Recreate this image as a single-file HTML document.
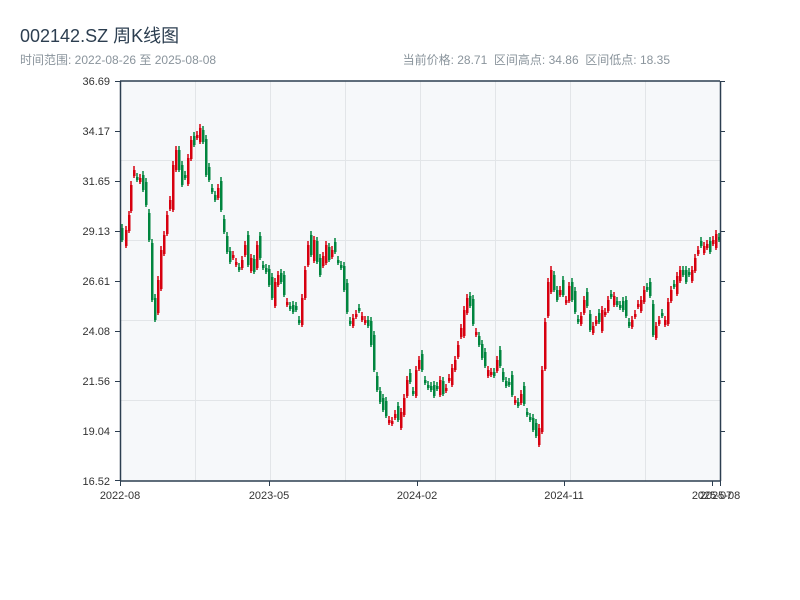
<!DOCTYPE html>
<html><head><meta charset="utf-8"><style>
body{margin:0;background:#fff;width:800px;height:600px;overflow:hidden;font-family:"Liberation Sans","Noto Sans CJK SC",sans-serif}
.t{position:absolute;left:20px;top:22px;font-size:18px;color:#2c3e50}
.s{position:absolute;left:20px;top:51px;font-size:12px;color:#8a949c}
.r{position:absolute;right:130px;top:51px;font-size:12px;color:#8a949c;white-space:pre}
svg{position:absolute;left:0;top:0}
</style></head><body>
<div class="t">002142.SZ 周K线图</div>
<div class="s">时间范围: 2022-08-26 至 2025-08-08</div>
<div class="r">当前价格: 28.71  区间高点: 34.86  区间低点: 18.35</div>
<svg id="c" width="800" height="600" xmlns="http://www.w3.org/2000/svg" font-family="Liberation Sans, sans-serif" font-size="11" fill="#333">
<rect x="120" y="81" width="600" height="400" fill="#f6f8fa"/>
<g stroke="#e2e5e8" stroke-width="1">
<line x1="120" y1="160.5" x2="720" y2="160.5"/><line x1="120" y1="240.5" x2="720" y2="240.5"/><line x1="120" y1="320.5" x2="720" y2="320.5"/><line x1="120" y1="400.5" x2="720" y2="400.5"/>
<line x1="195.5" y1="81" x2="195.5" y2="481"/><line x1="270.5" y1="81" x2="270.5" y2="481"/><line x1="345.5" y1="81" x2="345.5" y2="481"/><line x1="420.5" y1="81" x2="420.5" y2="481"/><line x1="495.5" y1="81" x2="495.5" y2="481"/><line x1="570.5" y1="81" x2="570.5" y2="481"/><line x1="645.5" y1="81" x2="645.5" y2="481"/>
</g>
<g id="k"></g>
<g stroke="#2c3e50" stroke-width="1.5" fill="none">
<line x1="120" y1="81" x2="720" y2="81"/><line x1="120.5" y1="81" x2="120.5" y2="481"/><line x1="120" y1="481" x2="721" y2="481"/><line x1="720.5" y1="81" x2="720.5" y2="481"/>
</g>
<g stroke="#2c3e50" stroke-width="1">
<line x1="115" y1="81.5" x2="120" y2="81.5"/><line x1="115" y1="131.5" x2="120" y2="131.5"/><line x1="115" y1="181.5" x2="120" y2="181.5"/><line x1="115" y1="231.5" x2="120" y2="231.5"/><line x1="115" y1="281.5" x2="120" y2="281.5"/><line x1="115" y1="331.5" x2="120" y2="331.5"/><line x1="115" y1="381.5" x2="120" y2="381.5"/><line x1="115" y1="431.5" x2="120" y2="431.5"/><line x1="115" y1="480.5" x2="120" y2="480.5"/>
<line x1="720" y1="81.5" x2="725" y2="81.5"/><line x1="720" y1="131.5" x2="725" y2="131.5"/><line x1="720" y1="181.5" x2="725" y2="181.5"/><line x1="720" y1="231.5" x2="725" y2="231.5"/><line x1="720" y1="281.5" x2="725" y2="281.5"/><line x1="720" y1="331.5" x2="725" y2="331.5"/><line x1="720" y1="381.5" x2="725" y2="381.5"/><line x1="720" y1="431.5" x2="725" y2="431.5"/>
<line x1="120.5" y1="481" x2="120.5" y2="486"/><line x1="269.5" y1="481" x2="269.5" y2="486"/><line x1="417.5" y1="481" x2="417.5" y2="486"/><line x1="564.5" y1="481" x2="564.5" y2="486"/><line x1="712.5" y1="481" x2="712.5" y2="486"/><line x1="720.5" y1="481" x2="720.5" y2="486"/>
</g>
<g text-anchor="end" fill="#333">
<text x="110" y="85">36.69</text><text x="110" y="135">34.17</text><text x="110" y="185">31.65</text><text x="110" y="235">29.13</text><text x="110" y="285">26.61</text><text x="110" y="335">24.08</text><text x="110" y="385">21.56</text><text x="110" y="435">19.04</text><text x="110" y="485">16.52</text>
</g>
<g text-anchor="middle" fill="#333">
<text x="120" y="499">2022-08</text><text x="269" y="499">2023-05</text><text x="417" y="499">2024-02</text><text x="564" y="499">2024-11</text><text x="712" y="499">2025-07</text><text x="720" y="499">2025-08</text>
</g>
</svg>
<script>
var p=[[121,240],[125,230],[128,215],[130,185],[133,170],[136,180],[139,178],[142,190],[145,205],[148,240],[151,300],[154,320],[157,280],[160,250],[163,235],[166,215],[169,200],[172,165],[175,150],[178,170],[181,185],[184,178],[187,158],[190,140],[193,145],[196,135],[199,128],[202,142],[205,175],[208,180],[211,192],[214,200],[217,188],[220,210],[223,232],[226,252],[229,262],[232,255],[235,262],[238,268],[241,260],[244,245],[247,265],[250,258],[253,272],[256,245],[259,258],[262,266],[265,272],[268,285],[271,298],[274,282],[277,275],[280,282],[283,295],[286,302],[289,306],[292,312],[295,310],[298,320],[301,298],[304,270],[307,245],[310,255],[313,240],[316,262],[319,275],[322,256],[325,245],[328,260],[331,250],[334,252],[337,262],[340,268],[343,290],[346,312],[349,322],[352,318],[355,314],[358,310],[361,316],[364,320],[367,326],[370,345],[373,370],[376,390],[379,402],[382,410],[385,416],[388,420],[391,421],[394,414],[397,420],[400,412],[403,398],[406,380],[409,382],[412,392],[415,370],[418,360],[421,370],[424,380],[427,386],[430,390],[433,396],[436,389],[439,380],[442,394],[445,388],[448,378],[451,368],[454,360],[457,345],[460,328],[463,310],[466,298],[469,306],[472,324],[475,332],[478,345],[481,358],[484,366],[487,370],[490,372],[493,376],[496,360],[499,366],[502,380],[505,386],[508,384],[511,395],[514,400],[517,406],[520,394],[523,404],[526,414],[529,420],[532,430],[535,436],[538,428],[541,370],[544,322],[547,282],[550,270],[553,290],[556,300],[559,290],[562,295],[565,300],[568,286],[571,300],[574,312],[577,322],[580,316],[583,300],[586,306],[589,330],[592,326],[595,320],[598,322],[601,310],[604,312],[607,300],[610,295],[613,296],[616,305],[619,306],[622,310],[625,316],[628,326],[631,320],[634,314],[637,304],[640,300],[643,290],[646,290],[649,296],[652,335],[655,326],[658,320],[661,316],[664,320],[667,302],[670,290],[673,284],[676,276],[679,270],[682,275],[685,282],[688,275],[691,270],[694,258],[697,250],[700,246],[703,246],[706,244],[709,252],[712,240],[715,234],[718,240]];
var s='',prev=238;
for(var i=0;i<p.length;i++){var x=p[i][0],c=p[i][1];var n=((i*37)%21)-10;var o=prev+n;var up=c<o;var col=up?'#d7000f':'#00853e';var t=Math.min(o,c),b=Math.max(o,c);if(b-t<3)b=t+3;var w=4+((i*7)%7);
s+='<line x1="'+(x+1)+'" x2="'+(x+1)+'" y1="'+(t-w)+'" y2="'+(b+w-2)+'" stroke="'+col+'" stroke-width="1.5"/>';
s+='<rect x="'+x+'" y="'+t+'" width="2.5" height="'+(b-t)+'" fill="'+col+'"/>';prev=c;}
document.getElementById('k').innerHTML=s;
</script>
</body></html>
